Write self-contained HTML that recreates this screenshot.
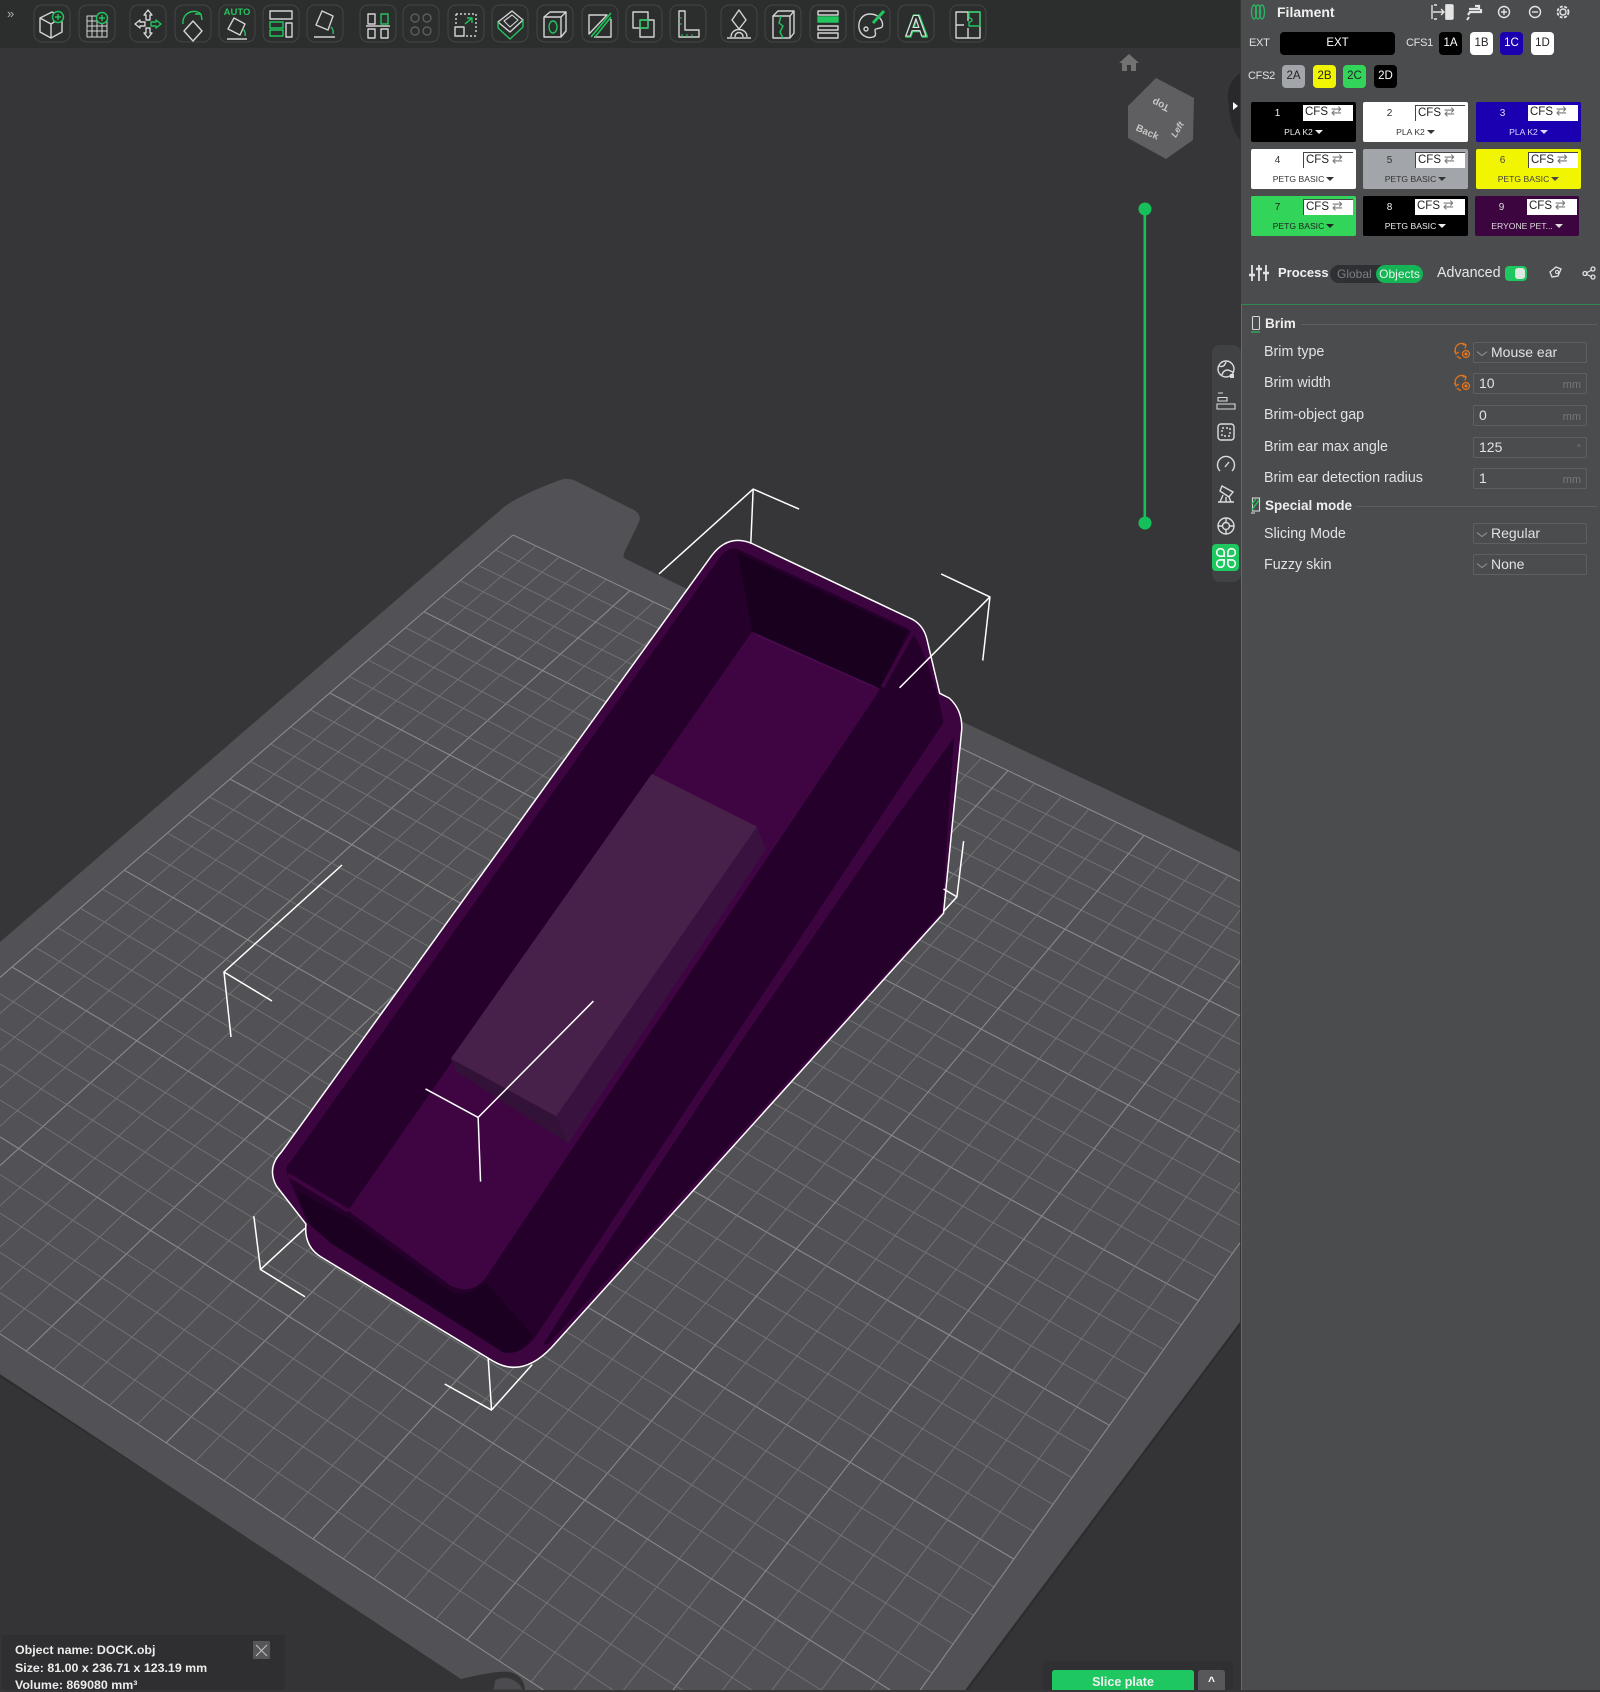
<!DOCTYPE html>
<html><head><meta charset="utf-8"><title>Slicer</title>
<style>
html,body{margin:0;padding:0;width:1600px;height:1690px;overflow:hidden;background:#363638;font-family:"Liberation Sans","Noto Sans CJK SC",sans-serif;color:#e4e4e4}
#v{position:absolute;left:0;top:0}
.a{position:absolute;white-space:nowrap}
#panel{position:absolute;left:1241px;top:0;width:359px;height:1690px;background:#4b4c4e;overflow:hidden}
.btn{position:absolute;border-radius:4px;text-align:center;font-size:11.5px;line-height:23px;height:23px;width:23px;background:#000;color:#fff}
.lb{position:absolute;font-size:11px;letter-spacing:-.3px;line-height:23px;color:#e2e2e2}
.card{position:absolute;width:105px;height:40px;border-radius:2px;font-size:10px;color:#eee;background:#000}
.card .n{position:absolute;left:20px;width:13px;top:5px;text-align:center;line-height:14px;font-size:10px}
.card .c{position:absolute;left:52px;top:3px;width:50px;height:16px;box-sizing:border-box;background:#fff;color:#222;font-size:11.5px;line-height:15px;padding-left:2px}
.card .c i{font-style:normal;color:#777;font-family:"DejaVu Sans",sans-serif;font-size:13px;line-height:13px;margin-left:3px}
.card .t{position:absolute;left:0;right:0;top:24px;text-align:center;font-size:8.6px;line-height:13px}
.card .t:after{content:"";display:inline-block;margin-left:2px;vertical-align:1px;border-left:4px solid transparent;border-right:4px solid transparent;border-top:4px solid currentColor}
.bd{border-left:1.5px solid #444;border-top:1px solid #444}
.row{position:absolute;left:23px;font-size:14.3px;line-height:20px;color:#e2e2e2}
.in{position:absolute;left:232px;width:114px;height:21px;box-sizing:border-box;border:1px solid #5e5f62;border-radius:2px;font-size:14px;line-height:18px;color:#e2e2e2;padding-left:5px}
.in.s{padding-left:17px}
.in.s:before{content:"";position:absolute;left:5px;top:6px;width:5px;height:5px;border-right:1px solid #8a8a8a;border-bottom:1px solid #8a8a8a;transform:scaleX(1.3) rotate(45deg)}
.in u{position:absolute;right:5px;top:2px;text-decoration:none;color:#77787a;font-size:11px}
.h{position:absolute;left:24px;font-size:13.5px;font-weight:bold;line-height:20px;color:#eee}
.hl{position:absolute;height:1px;background:#5e5f61}
.o{position:absolute;left:15px;font-size:12.4px;font-weight:bold;line-height:10px;color:#ececec;white-space:nowrap}
</style></head><body>
<svg id="v" width="1600" height="1690" viewBox="0 0 1600 1690">
<rect width="1600" height="1690" fill="#363638"/>
<rect y="1000" width="1600" height="690" fill="#343436"/>
<path d="M0 1376L467 1678M967 1690L1240 1324" fill="none" stroke="#2b2b2d" stroke-width="1.5"/>
<path d="M0 942L504 507Q520 495 560 480Q569 477 578 482L634 510Q642 515 639 522L624 553Q622 558 628 560L685 588L963 722L1240 852V1322L965 1690H525Q524 1676 510 1672Q498 1670 461 1679L0 1374Z" fill="#525256"/>
<path d="M495 1680a20 20 0 0 1 28 10h-30z" fill="#4c4c50" stroke="#38383a"/>
<g id="grid" fill="none"></g>
<g transform="translate(250 480) scale(.4783 .6059)" stroke-linejoin="round">
<path d="M65 1110L965 125Q1000 88 1050 105L1385 230Q1408 240 1415 262L1442 352L1462 360Q1490 380 1488 412L1450 715L630 1432Q570 1482 510 1455L150 1283Q112 1265 117 1228L55 1165Q35 1135 65 1110Z" fill="#3c0540" stroke="#fff" stroke-width="1.5" vector-effect="non-scaling-stroke"/>
<path d="M85 1125L985 125Q1005 105 1030 118L1375 245Q1395 258 1415 300L1440 360L1450 400L1290 590L600 1410Q570 1445 530 1440L170 1260L120 1225L80 1150Q70 1135 85 1125Z" fill="#25002b"/>
<path d="M1472 425L1447 712L625 1425L612 1428L634 1400L722 1290L1024 930L1312 600Z" fill="#25002b"/>
<path d="M1020 120L1375 250L1318 345L1050 250Z" fill="#18001e"/>
<path d="M1388 248L1322 342" stroke="#3c0540" stroke-width="4" vector-effect="non-scaling-stroke"/>
<path d="M95 1172L215 1222L420 1340Q460 1350 490 1322L590 1410Q570 1445 530 1440L170 1260L125 1229Z" fill="#1c0022"/>
<path d="M80 1147L205 1206" stroke="#3f0542" stroke-width="4" vector-effect="non-scaling-stroke"/>
<path d="M1050 250L1318 345L490 1320Q460 1345 420 1330L205 1206Z" fill="#3f0542"/>
<path d="M1060 256L1310 343" stroke="#4a0c4e" stroke-width="1.500" vector-effect="non-scaling-stroke"/>
<path d="M840 485L1060 572L1078 610L665 1095L430 975L420 955Z" fill="#3a1240"/>
<path d="M420 955L640 1050L665 1095L430 975Z" fill="#321236"/>
<path d="M840 485L1060 572L640 1050L420 955Z" fill="#48214a"/>
<g fill="none" stroke="#fff" stroke-width="1.5">
<path vector-effect="non-scaling-stroke" d="M855 155L1052 15L1148 48M1052 15L1047 105"/>
<path vector-effect="non-scaling-stroke" d="M1445 155L1547 193L1532 298M1547 193L1358 343"/>
<path vector-effect="non-scaling-stroke" d="M718 860L477 1052L367 1005M477 1052L482 1158"/>
<path vector-effect="non-scaling-stroke" d="M8 1215L22 1303L115 1348M22 1303L115 1235"/>
<path vector-effect="non-scaling-stroke" d="M407 1492L505 1535L590 1460M505 1535L498 1450"/>
<path vector-effect="non-scaling-stroke" d="M1492 596L1478 688L1450 675M1478 688L1450 712"/>
</g></g>
<path d="M342 865L224 972L272 1001M224 972L231 1037" fill="none" stroke="#fff" stroke-width="1.5"/>

<!-- toolbar -->
<rect width="1240" height="48" fill="#2c2d2d"/>
<text x="7" y="18" font-size="13" fill="#b0b0b0" font-family="Liberation Sans">»</text>
<g fill="none" stroke="#444646" stroke-width="1">
<rect x="34" y="5" width="36" height="37" rx="8"/><rect x="79" y="5" width="36" height="37" rx="8"/><rect x="130" y="5" width="36" height="37" rx="8"/><rect x="175" y="5" width="36" height="37" rx="8"/><rect x="219" y="5" width="36" height="37" rx="8"/><rect x="263" y="5" width="36" height="37" rx="8"/><rect x="307" y="5" width="36" height="37" rx="8"/><rect x="360" y="5" width="36" height="37" rx="8"/><rect x="403" y="5" width="36" height="37" rx="8"/><rect x="448" y="5" width="36" height="37" rx="8"/><rect x="492" y="5" width="36" height="37" rx="8"/><rect x="537" y="5" width="36" height="37" rx="8"/><rect x="582" y="5" width="36" height="37" rx="8"/><rect x="626" y="5" width="36" height="37" rx="8"/><rect x="670" y="5" width="36" height="37" rx="8"/><rect x="721" y="5" width="36" height="37" rx="8"/><rect x="765" y="5" width="36" height="37" rx="8"/><rect x="810" y="5" width="36" height="37" rx="8"/><rect x="854" y="5" width="36" height="37" rx="8"/><rect x="898" y="5" width="36" height="37" rx="8"/><rect x="950" y="5" width="36" height="37" rx="8"/>
</g>
<g fill="none" stroke="#d4d4d4" stroke-width="1.4" stroke-linejoin="round">
<g transform="translate(52 24)"><path d="M-12-6L0-12L10-7V8L-1 14L-12 8ZM-12-6L-1 0L10-7M-1 0V14"/><g stroke="#22c55e"><circle cx="6" cy="-7" r="5.500" fill="#2c2d2d"/><path d="M6-10V-4M3-7H9"/></g></g>
<g transform="translate(97 24)"><path d="M-10-8H10V13H-10ZM-10-3H10M-10 2H10M-10 7H10M-5-8V13M0-8V13M5-8V13" stroke-width="1"/><g stroke="#22c55e"><circle cx="5" cy="-6" r="5.500" fill="#2c2d2d"/><path d="M5-9V-3M2-6H8"/></g></g>
<g transform="translate(148 24)"><path d="M0-14L4-9H2V-4H-2V-9H-4ZM0 14L4 9H2V4H-2V9H-4ZM-13 0L-8-4V-2H-3V2H-8V4Z"/><path d="M13 0L8-4V-2H3V2H8V4Z" stroke="#22c55e"/></g>
<g transform="translate(193 24)"><path d="M0-3L9 7L0 17L-9 7Z"/><path d="M-10 0A11 11 0 0 1 8-10M8-10L9-4M8-10L2-10" stroke="#22c55e"/></g>
<g transform="translate(237 24)"><text x="0" y="-9" text-anchor="middle" font-size="9.500" font-weight="bold" fill="#22c55e" stroke="none" font-family="Liberation Sans">AUTO</text><path d="M-3-6L8 0L3 11L-9 5ZM-10 15H10"/><path d="M6 5Q9 8 8 12" stroke="#22c55e"/></g>
<g transform="translate(281 24)"><path d="M-11-13H11V-5H-11ZM5-1H11V13H5Z"/><path d="M-11-2H2V4H-11ZM-11 6H2V12H-11Z" stroke="#22c55e"/></g>
<g transform="translate(325 24)"><path d="M-3-13L8-8L3 6L-9 1ZM-11 13H10"/><path d="M6 3Q9 6 8 10" stroke="#22c55e"/></g>
<g transform="translate(378 24)"><path d="M-10-10H-3V0H-10ZM-10 5H-3V14H-10ZM3 5H10V14H3ZM-12 2H12"/><path d="M3-10H10V0H3Z" stroke="#22c55e"/></g>
<g transform="translate(421 24)" stroke="#5c5d5d"><circle cx="-6" cy="-6" r="4"/><circle cx="6" cy="-6" r="4"/><circle cx="-6" cy="7" r="4"/><circle cx="6" cy="7" r="4"/></g>
<g transform="translate(466 24)"><path d="M-10-10H10M-10-10V0M10-10V10M0 12H10" stroke-dasharray="2 2"/><rect x="-11" y="3" width="9" height="9"/><path d="M-1 0L6-6M1-6H6V-1" stroke="#22c55e"/></g>
<g transform="translate(510 24)"><path d="M-12-2L2-13L13-4L0 8Z"/><path d="M-6-3L2-9L8-4L0 3Z" stroke-width="1.100"/><path d="M-12 4L0 15L13 3M-12 -2V4M13-4V3" stroke="#22c55e"/></g>
<g transform="translate(555 24)"><path d="M-11-7H6V13H-11ZM-11-7L-5-12H11V7L6 13M6-7L11-12"/><ellipse cx="-2" cy="3" rx="4" ry="6" stroke="#22c55e"/></g>
<g transform="translate(600 24)"><path d="M-11-9H7L-11 10ZM11-5V13H-6"/><path d="M11-11L-9 13M11-7L-5 13" stroke="#22c55e" stroke-width="1.600"/></g>
<g transform="translate(644 24)"><path d="M-11-12H4V4H-11ZM-4-4H10V13H-4Z"/><path d="M-4-4H4V4H-4Z" stroke="#22c55e"/></g>
<g transform="translate(688 24)"><path d="M-9-13H-3V6H11V13H-9Z"/><path d="M-6 10V13M-1 10V13M4 10V13M-9 0H-6M-9-6H-6" stroke="#22c55e" stroke-width="1"/></g>
<g transform="translate(739 24)"><path d="M0-14L7-4L0 5L-7-4ZM-8 13C-8 3 8 3 8 13M-4 13C-4 7 4 7 4 13M-12 14H12"/></g>
<g transform="translate(783 24)"><path d="M-10-8H7V14H-10ZM-10-8L-5-13H11V9L7 14M7-8L11-13"/><path d="M-2-8L-4-1L0 2L-3 8L0 14" stroke="#22c55e"/></g>
<g transform="translate(828 24)"><path d="M-10 2H10V6H-10ZM-10 9H10V14H-10Z"/><path d="M-10-13H10V-9H-10Z"/><path d="M-10-7H10V-2H-10Z" stroke="#22c55e" fill="#22c55e"/></g>
<g transform="translate(872 24)"><path d="M-2-10C-10-10-14-3-13 4C-12 11-5 15 1 13C5 12 3 8 3 6C3 4 8 5 10 3C12 0 9-10-2-10Z"/><circle cx="-6" cy="5" r="2"/><path d="M1-1L12-13" stroke="#22c55e" stroke-width="3"/></g>
<text x="916.500" y="36.500" text-anchor="middle" font-size="31" font-weight="bold" fill="#2c2d2d" stroke="#22c55e" stroke-width="2.400" font-family="Liberation Sans">A</text>
<text x="916" y="36" text-anchor="middle" font-size="30" font-weight="bold" fill="#2c2d2d" stroke="#e0e0e0" stroke-width="1.100" font-family="Liberation Sans">A</text>
<g transform="translate(968 24)"><path d="M-12-12H12V14H-12ZM0-12V-3M0 4V14M-12 1H-4"/><path d="M1-12H12V2H1V-2C5-2 5-6 1-6Z" stroke="#22c55e"/></g>
</g>
<!-- home -->
<path d="M1129 54L1139 63H1136V71H1131V65H1127V71H1122V63H1119Z" fill="#727273"/>
<!-- nav cube -->
<path d="M1156 78L1194 98L1193 140L1166 159L1128 138L1128 106Z" fill="#5f5f61"/>
<g fill="#c6c6c6" font-family="Liberation Sans" font-size="10" font-weight="bold" text-anchor="middle">
<text transform="translate(1162 102) rotate(205)">Top</text>
<text transform="translate(1146 135) rotate(24)">Back</text>
<text transform="translate(1180 131) rotate(-60)" font-style="italic" font-size="9">Left</text>
</g>
<!-- collapse handle -->
<path d="M1240 73Q1224 85 1229 106Q1230 128 1240 140Z" fill="#29292b"/>
<path d="M1233 102L1238 106L1233 110Z" fill="#fff"/>
<!-- slider -->
<rect x="1143.500" y="209" width="2.600" height="314" fill="#15c05a"/>
<circle cx="1145" cy="209" r="6.500" fill="#15c05a"/><circle cx="1145" cy="523" r="6.500" fill="#15c05a"/>
<!-- side toolbar -->
<rect x="1212" y="345" width="29" height="237" rx="8" fill="#414244"/>
<rect x="1212" y="544" width="27" height="27" rx="4" fill="#1ec75f"/>
<g fill="none" stroke="#dcdcdc" stroke-width="1.400" transform="translate(1226 0)">
<g transform="translate(0 369)"><circle r="8"/><path d="M-7-3Q-2-1 0-7M-4 6Q-3 1 2 1L7 3"/><path d="M4 5H8V9H4Z" fill="#dcdcdc" stroke="none"/></g>
<g transform="translate(0 401)"><path d="M-8-8H-3M-8-3.500H1V0H-8ZM-9 3H9V8H-9Z" stroke-width="1.100"/></g>
<g transform="translate(0 432)"><rect x="-8" y="-8" width="16" height="16" rx="3"/><rect x="-4" y="-4" width="8" height="8" stroke-dasharray="2 2"/></g>
<g transform="translate(0 464)"><path d="M-6 7A8.500 8.500 0 1 1 6 7M-1 3L3-2"/></g>
<g transform="translate(0 494)"><path d="M-4-8L7-2L3 3L-6-3ZM-8 8H8M-6 8L-3 1M5 8L3 3M0 8V3"/></g>
<g transform="translate(0 526)"><circle r="8"/><circle r="3.500"/><path d="M-8 0H-4M4 0H8M0-8V-4M0 4V8"/></g>
<g transform="translate(0 558) scale(1.250)" stroke="#fff" stroke-width="1.300"><path d="M-1.500-1.500H-5A3 3 0 1 1-1.500-5ZM1.500-1.500H5A3 3 0 1 0 1.500-5ZM-1.500 1.500H-5A3 3 0 1 0-1.500 5ZM1.500 1.500H5A3 3 0 1 1 1.500 5Z"/></g>
</g>
<!-- object info -->
<rect x="2" y="1635" width="283" height="55" fill="#2f2f31"/>
<rect x="253" y="1641" width="17" height="18" rx="1" fill="#565658"/>
<path d="M256 1645L267 1656M267 1645L256 1656" stroke="#c4c4c4" fill="none"/>
<!-- slice -->
<rect x="1043" y="1661" width="190" height="29" fill="#303032"/>
<path d="M1052 1690V1673Q1052 1670 1055 1670H1191Q1194 1670 1194 1673V1690Z" fill="#1ec75f"/>
<path d="M1198 1690V1673Q1198 1670 1201 1670H1222Q1225 1670 1225 1673V1690Z" fill="#58585a"/>
</svg>

<div class="o" style="top:1645px">Object name: DOCK.obj</div>
<div class="o" style="top:1663px">Size: 81.00 x 236.71 x 123.19 mm</div>
<div class="o" style="top:1680px">Volume: 869080 mm³</div>
<div class="a" style="left:1052px;top:1674px;width:142px;height:16px;overflow:hidden;text-align:center;font-size:12.5px;font-weight:bold;line-height:16px;color:#f0f0f0">Slice plate</div>
<div class="a" style="left:1198px;top:1673px;width:27px;height:16px;overflow:hidden;text-align:center;font-size:12px;font-weight:bold;line-height:16px;color:#fff">^</div>

<div id="panel">
<svg width="359" height="40" style="position:absolute;left:0;top:0" fill="none" stroke="#e4e4e4" stroke-width="1.400">
<g stroke="#2fae62"><ellipse cx="13" cy="12" rx="2.500" ry="7"/><ellipse cx="17" cy="12" rx="2.500" ry="7"/><ellipse cx="21" cy="12" rx="2.500" ry="7"/></g>
<path d="M193 5H196M193 19H196M191 5V19M205 5H211V19H205Z M192 12H203M200 9L203 12L200 15" />
<rect x="205" y="5" width="7" height="14" rx="1" fill="#e4e4e4"/>
<path d="M228 9H238V6H234M240 9V12H229L227 15" stroke-width="2.200"/><path d="M228 17L226 20" stroke-width="2"/>
<circle cx="263" cy="12" r="5.500"/><path d="M260 12H266M263 9V15"/>
<circle cx="294" cy="12" r="5.500"/><path d="M291 12H297"/>
<circle cx="322" cy="12" r="3" /><circle cx="322" cy="12" r="5.500" stroke-dasharray="3 1.500" stroke-width="1.800"/>
</svg>
<div class="a" style="left:36px;top:3px;font-size:14px;font-weight:bold;line-height:18px;color:#f0f0f0">Filament</div>

<div class="lb" style="left:8px;top:32px">EXT</div>
<div class="btn" style="left:39px;top:32px;width:115px">EXT</div>
<div class="lb" style="left:165px;top:32px">CFS1</div>
<div class="btn" style="left:198px;top:32px">1A</div>
<div class="btn" style="left:229px;top:32px;background:#fff;color:#222">1B</div>
<div class="btn" style="left:259px;top:32px;background:#1a00b0">1C</div>
<div class="btn" style="left:290px;top:32px;background:#fff;color:#222">1D</div>
<div class="lb" style="left:7px;top:65px">CFS2</div>
<div class="btn" style="left:41px;top:65px;background:#a2a5a9;color:#222">2A</div>
<div class="btn" style="left:72px;top:65px;background:#f2f500;color:#222">2B</div>
<div class="btn" style="left:102px;top:65px;background:#32d55a;color:#222">2C</div>
<div class="btn" style="left:133px;top:65px">2D</div>

<div class="card" style="left:10px;top:102px"><span class="n">1</span><span class="c">CFS<i>⇄</i></span><span class="t">PLA K2</span></div>
<div class="card" style="left:122px;top:102px;background:#fff;color:#333"><span class="n">2</span><span class="c bd">CFS<i>⇄</i></span><span class="t">PLA K2</span></div>
<div class="card" style="left:235px;top:102px;background:#1a00b0;color:#dcdcff"><span class="n">3</span><span class="c">CFS<i>⇄</i></span><span class="t">PLA K2</span></div>
<div class="card" style="left:10px;top:149px;background:#fff;color:#333"><span class="n">4</span><span class="c bd">CFS<i>⇄</i></span><span class="t">PETG BASIC</span></div>
<div class="card" style="left:122px;top:149px;background:#a2a5a9;color:#333"><span class="n">5</span><span class="c bd">CFS<i>⇄</i></span><span class="t">PETG BASIC</span></div>
<div class="card" style="left:235px;top:149px;background:#f2f500;color:#444"><span class="n">6</span><span class="c bd">CFS<i>⇄</i></span><span class="t">PETG BASIC</span></div>
<div class="card" style="left:10px;top:196px;background:#32d55a;color:#222"><span class="n">7</span><span class="c bd">CFS<i>⇄</i></span><span class="t">PETG BASIC</span></div>
<div class="card" style="left:122px;top:196px"><span class="n">8</span><span class="c">CFS<i>⇄</i></span><span class="t">PETG BASIC</span></div>
<div class="card" style="left:234px;top:196px;width:104px;background:#3c0540;color:#ddd"><span class="n">9</span><span class="c">CFS<i>⇄</i></span><span class="t">ERYONE PET...</span></div>

<svg width="359" height="30" style="position:absolute;left:0;top:258px" fill="none" stroke="#e4e4e4" stroke-width="1.800">
<path d="M11 7V23M18 7V23M25 7V23" /><path d="M8 17H14M15 11H21M22 15H28" stroke-width="2.400"/>
<path d="M309 14L315 9L320 11L317 18L311 19Z" stroke-width="1.300"/><circle cx="316" cy="14" r="1.500" stroke-width="1"/>
<path d="M345 15L351 12M345 16L351 19" stroke-width="1.200"/><circle cx="344" cy="15.500" r="2" stroke-width="1.300"/><circle cx="352" cy="11" r="2" stroke-width="1.300"/><circle cx="352" cy="19" r="2" stroke-width="1.300"/>
</svg>
<div class="a" style="left:37px;top:264px;font-size:13px;font-weight:bold;line-height:18px;color:#f0f0f0">Process</div>
<div class="a" style="left:89px;top:265px;width:93px;height:18px;border-radius:9px;background:#2f3034"></div>
<div class="a" style="left:96px;top:265px;font-size:12px;line-height:18px;color:#7d7e80">Global</div>
<div class="a" style="left:135px;top:265px;width:47px;height:18px;border-radius:9px;background:#15b556;text-align:center;font-size:12px;line-height:18px;color:#e8f5ec">Objects</div>
<div class="a" style="left:196px;top:264px;font-size:14.3px;line-height:18px;color:#e8e8e8">Advanced</div>
<div class="a" style="left:264px;top:266px;width:22px;height:15px;border-radius:4px;background:#1ec75f"></div>
<div class="a" style="left:274px;top:268px;width:10px;height:11px;border-radius:3px;background:#dde8e0"></div>

<div class="a" style="left:0;top:304px;width:360px;height:1px;background:#2e8a55"></div>
<div class="a" style="left:0;top:304px;width:1px;height:1386px;background:#2e8a55"></div>

<svg width="24" height="240" style="position:absolute;left:6px;top:310px" fill="none" stroke="#d6d6d6" stroke-width="1.100">
<rect x="5.500" y="6.500" width="7" height="13" rx="1"/><path d="M4 22H13" stroke="#22c55e"/>
<rect x="5.500" y="188" width="7" height="13"/><path d="M5 200L12 190M5 194L9 189" stroke="#22c55e" stroke-width="1.300"/><path d="M4 203H8"/>
</svg>
<div class="h" style="top:314px">Brim</div><div class="hl" style="left:60px;top:324px;width:296px"></div>
<div class="row" style="top:342px">Brim type</div>
<div class="row" style="top:373px">Brim width</div>
<div class="row" style="top:405px">Brim-object gap</div>
<div class="row" style="top:437px">Brim ear max angle</div>
<div class="row" style="top:468px">Brim ear detection radius</div>
<div class="in s" style="top:342px">Mouse ear</div>
<div class="in" style="top:373px">10<u>mm</u></div>
<div class="in" style="top:405px">0<u>mm</u></div>
<div class="in" style="top:437px">125<u>°</u></div>
<div class="in" style="top:468px">1<u>mm</u></div>
<svg width="20" height="60" style="position:absolute;left:212px;top:340px" fill="none" stroke="#e8751a" stroke-width="1.200">
<g><path d="M13 5A6.500 6.500 0 0 0 3 13M4 16A6.500 6.500 0 0 0 8 18.500"/><path d="M9.500 4.500L13 5L12 8.500M1.500 10.500L3 14L6 12"/><circle cx="13" cy="14" r="3.500"/><circle cx="13" cy="14" r="1" fill="#e8751a"/></g>
<g transform="translate(0 32)"><path d="M13 5A6.500 6.500 0 0 0 3 13M4 16A6.500 6.500 0 0 0 8 18.500"/><path d="M9.500 4.500L13 5L12 8.500M1.500 10.500L3 14L6 12"/><circle cx="13" cy="14" r="3.500"/><circle cx="13" cy="14" r="1" fill="#e8751a"/></g>
</svg>
<div class="h" style="top:496px">Special mode</div><div class="hl" style="left:115px;top:506px;width:241px"></div>
<div class="row" style="top:524px">Slicing Mode</div>
<div class="row" style="top:555px">Fuzzy skin</div>
<div class="in s" style="top:523px">Regular</div>
<div class="in s" style="top:554px">None</div>
</div>
<script>
(function(){var A=[513,535],B=[1433,973],C=[800,1858],D=[-235,1180];
var dx1=B[0]-C[0],dx2=D[0]-C[0],sx=A[0]-B[0]+C[0]-D[0],dy1=B[1]-C[1],dy2=D[1]-C[1],sy=A[1]-B[1]+C[1]-D[1];
var q=dx1*dy2-dx2*dy1,g=(sx*dy2-dx2*sy)/q,h=(dx1*sy-sx*dy1)/q;
var a=B[0]-A[0]+g*B[0],b=D[0]-A[0]+h*D[0],c=A[0],d=B[1]-A[1]+g*B[1],e=D[1]-A[1]+h*D[1],f=A[1];
function P(u,v){var w=g*u+h*v+1;return [(a*u+b*v+c)/w,(d*u+e*v+f)/w]}
function clip(p,q){var t0=0,t1=1,X=q[0]-p[0],Y=q[1]-p[1],c=[[-X,p[0]],[X,1240-p[0]],[-Y,p[1]],[Y,1690-p[1]]];
for(var i=0;i<4;i++){var P1=c[i][0],Q=c[i][1];if(P1==0){if(Q<0)return null}else{var r=Q/P1;if(P1<0){if(r>t0)t0=r}else{if(r<t1)t1=r}}}
if(t0>=t1)return null;return "M"+(p[0]+X*t0).toFixed(1)+" "+(p[1]+Y*t0).toFixed(1)+"L"+(p[0]+X*t1).toFixed(1)+" "+(p[1]+Y*t1).toFixed(1)}
var s="";for(var i=0;i<=35;i++){var m=i%5==0,t=i/35,st=m?'stroke="#8a8a8c" stroke-width="1.1"':'stroke="#747477" stroke-width=".9"';
var l1=clip(P(t,0),P(t,1)),l2=clip(P(0,t),P(1,t));
if(l1)s+='<path '+st+' d="'+l1+'"/>';if(l2)s+='<path '+st+' d="'+l2+'"/>';}
document.getElementById("grid").innerHTML=s;})();
</script>
</body></html>
